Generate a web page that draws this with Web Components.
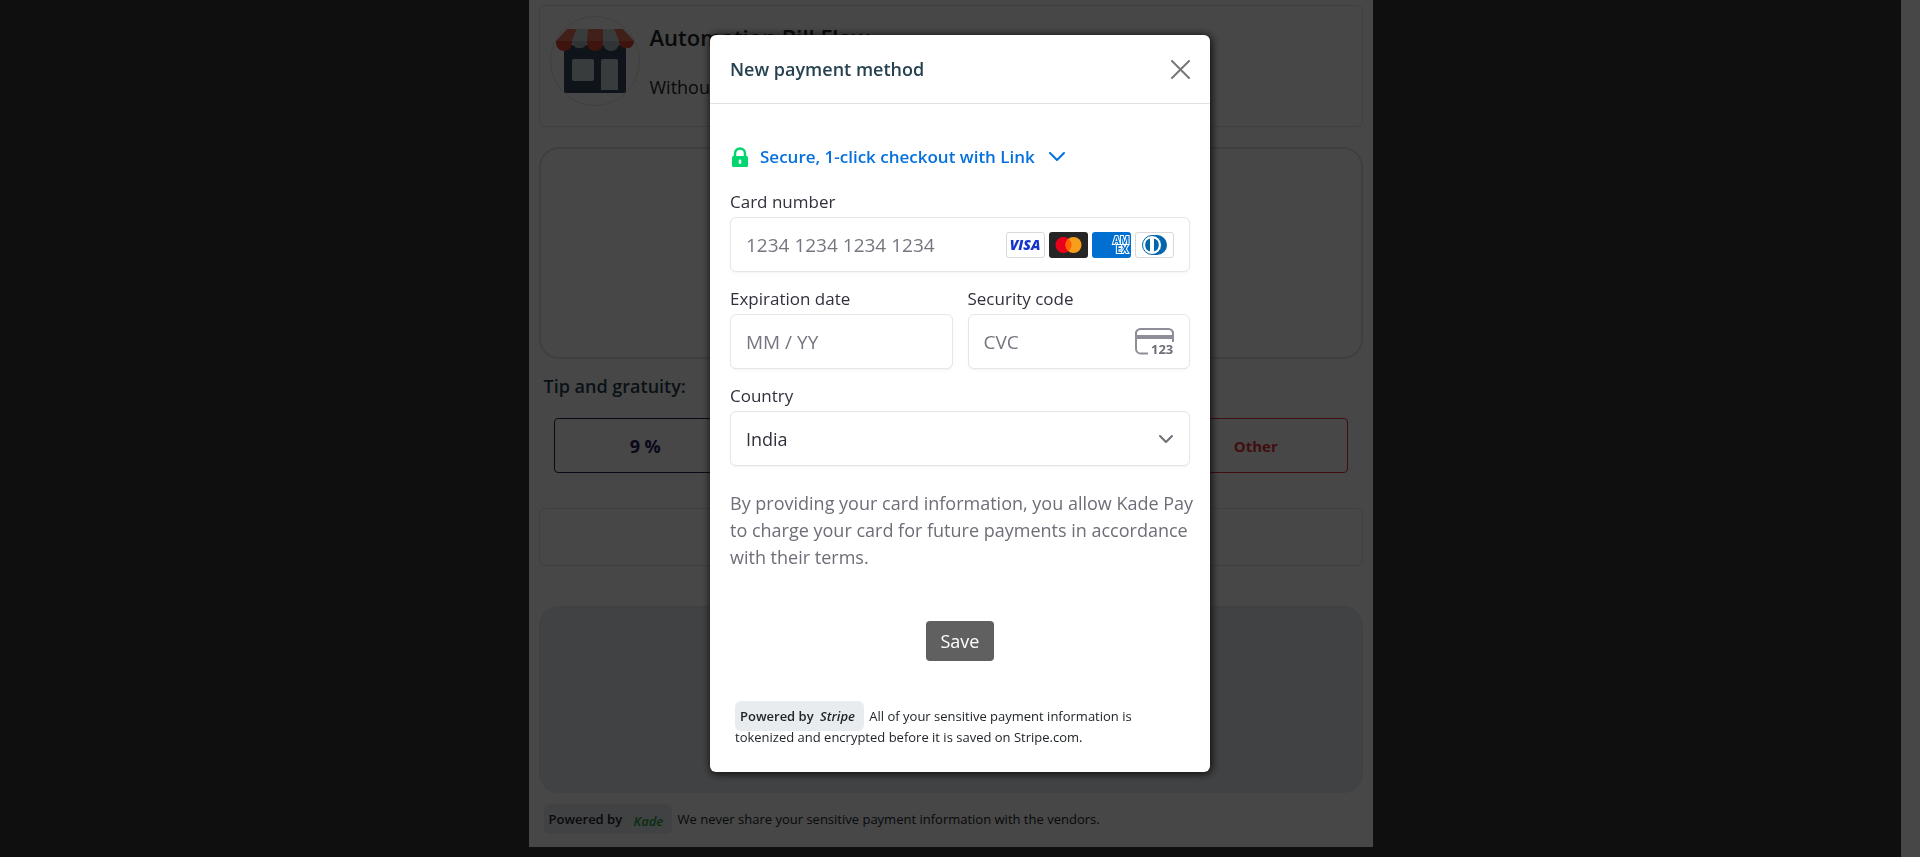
<!DOCTYPE html>
<html lang="en">
<head>
<meta charset="utf-8">
<title>Kade Pay – Automation Bill Flow</title>
<style>
  html, body { margin: 0; min-height: 100%; }
  body { background: #383838; color: #212529; font-family: "Open Sans", "Noto Sans", sans-serif; font-size: 18px; }
</style>
</head>
<body>
<kade-page>
  <store-card heading="Automation Bill Flow" subtitle="Without"></store-card>
  <kade-box kind="large"></kade-box>
  <tip-options></tip-options>
  <kade-box kind="line"></kade-box>
  <kade-box kind="filled"></kade-box>
  <powered-note brand="Kade" tone="green">We never share your sensitive payment information with the vendors.</powered-note>
</kade-page>

<pay-modal heading="New payment method">
  <payment-form></payment-form>
  <powered-note brand="Stripe">All of your sensitive payment information is tokenized and encrypted before it is saved on Stripe.com.</powered-note>
</pay-modal>

<script>
class Base extends HTMLElement {
  constructor() {
    super();
    this.attachShadow({ mode: "open" });
  }
  connectedCallback() {
    this.shadowRoot.innerHTML = "<style>*{box-sizing:border-box}:host{display:block}</style>" + this.render();
  }
  attr(name) { return this.getAttribute(name) || ""; }
}

/* Centred page column with a light gutter on the right of the window */
customElements.define("kade-page", class extends Base {
  render() {
    return `<style>
      :host { display: grid; grid-template-columns: minmax(0, 1fr) 19px; min-height: 100vh; }
      main { width: 100%; max-width: 844px; justify-self: center; align-self: start; background: #fff; padding: 5px 10px 10px; }
      .gutter { background: #fff; }
    </style>
    <main><slot></slot></main><div class="gutter"></div>`;
  }
});

customElements.define("store-card", class extends Base {
  render() {
    return `<style>
      section { display: flex; gap: 10px; padding: 10px; border: 1px solid #dee2e6; border-radius: 6px; min-height: 122px; }
      .logo { width: 90px; height: 90px; flex: none; border: 1px solid #dee2e6; border-radius: 50%; }
      svg { display: block; width: 88px; height: 88px; }
      h1 { margin: 6px 0 0; font-size: 22px; line-height: 30px; font-weight: 600; }
      p { margin: 22px 0 0; font-size: 18px; line-height: 26px; font-weight: 500; }
    </style>
    <section>
      <div class="logo"><svg viewBox="0 0 88 88" aria-hidden="true">
        <path d="M13 28h62v46a2 2 0 0 1-2 2H15a2 2 0 0 1-2-2z" fill="#34495e"/>
        <rect x="21" y="42" width="22" height="22" rx="2" fill="#ccd6dc"/>
        <path d="M52 42h13a2 2 0 0 1 2 2v29H50V44a2 2 0 0 1 2-2z" fill="#ccd6dc"/>
        <path d="M16 12h10l-5 12H5z" fill="#e8735f"/>
        <path d="M26 12h11v12H21z" fill="#ccd6dc"/>
        <path d="M37 12h15v12H36z" fill="#e8735f"/>
        <path d="M52 12h11l5 12H52z" fill="#ccd6dc"/>
        <path d="M63 12h9l11 12H68z" fill="#e8735f"/>
        <path d="M5 24h16v2a8 8 0 0 1-16 0z" fill="#e04434"/>
        <path d="M21 24h15v2a8 8 0 0 1-15 0z" fill="#b0babf"/>
        <path d="M36 24h16v2a8 8 0 0 1-16 0z" fill="#e04434"/>
        <path d="M52 24h16v2a8 8 0 0 1-16 0z" fill="#b0babf"/>
        <path d="M68 24h15v2a8 8 0 0 1-15 0z" fill="#e04434"/>
      </svg></div>
      <div><h1>${this.attr("heading")}</h1><p>${this.attr("subtitle")}</p></div>
    </section>`;
  }
});

customElements.define("kade-box", class extends Base {
  render() {
    return `<style>
      :host { border: 1px solid #dee2e6; border-radius: 6px; box-sizing: border-box; }
      :host([kind="large"]) { min-height: 212px; margin-top: 20px; border-width: 2px; border-radius: 20px; }
      :host([kind="line"]) { min-height: 58px; margin-top: 35px; }
      :host([kind="filled"]) { min-height: 187px; margin-top: 40px; border-width: 2px; border-color: #e6e9ed; border-radius: 20px; background: #e9ecef; }
    </style><slot></slot>`;
  }
});

customElements.define("tip-options", class extends Base {
  render() {
    return `<style>
      h2 { margin: 13px 5px 18px; font-size: 18px; line-height: 28px; font-weight: 600; color: #264150; }
      .row { display: grid; grid-template-columns: repeat(4, 1fr); gap: 20px; padding: 0 15px; }
      button { height: 55px; padding: 0; border: 1px solid #23235b; border-radius: 4px; background: #fff; color: #23235b; font: 700 18px "Open Sans", sans-serif; }
      .other { grid-column: 4; border-color: #e8323c; color: #e8323c; font-size: 15px; }
    </style>
    <h2>Tip and gratuity:</h2>
    <div class="row"><button type="button">9 %</button><button type="button" class="other">Other</button></div>`;
  }
});

customElements.define("powered-note", class extends Base {
  render() {
    return `<style>
      :host { font-size: 13px; line-height: 21px; padding: 16px 5px 7px; }
      p { margin: 0; }
      .badge { background: #e9ecef; border-radius: 6px; padding: 6px 9px 6px 5px; margin-right: 2px; font-weight: 600; }
      i { margin-left: 3px; }
      :host([tone]) i { color: #28a745; margin-left: 8px; position: relative; top: 2px; }
    </style>
    <p><span class="badge">Powered by <i>${this.attr("brand")}</i></span> <slot></slot></p>`;
  }
});

/* Dimmed backdrop with the dialog on top */
customElements.define("pay-modal", class extends Base {
  render() {
    return `<style>
      :host { position: fixed; inset: 0; overflow: auto; padding: 35px 16px; background: rgba(0, 0, 0, .72); }
      .dialog { max-width: 500px; margin: 0 auto; background: #fff; border-radius: 6px; box-shadow: 1px 1px 8px 1px rgba(0, 0, 0, .8); }
      header { display: flex; align-items: center; justify-content: space-between; padding: 20px; border-bottom: 1px solid #dee2e6; }
      h2 { margin: 0; font-size: 18px; line-height: 28px; font-weight: 600; color: #264150; }
      button { display: flex; padding: 0; border: 0; background: none; color: #777; }
      svg { width: 19px; height: 19px; }
      .body { padding: 41px 20px 17px; }
    </style>
    <div class="dialog" role="dialog" aria-modal="true" aria-labelledby="title">
      <header><h2 id="title">${this.attr("heading")}</h2>
        <button type="button" aria-label="Close"><svg viewBox="0 0 19 19" aria-hidden="true"><path d="M1 1l17 17M18 1L1 18" stroke="currentColor" stroke-width="2" stroke-linecap="round"/></svg></button>
      </header>
      <div class="body"><slot></slot></div>
    </div>`;
  }
});

/* Labelled text box, with a slot for icons at its right end */
customElements.define("pay-field", class extends Base {
  render() {
    return `<style>
      label { display: block; margin-bottom: 3px; font-size: 17px; line-height: 24px; color: #30313d; }
      .box { display: flex; align-items: center; height: 55px; padding: 0 15px; border: 1px solid #e6e6e6; border-radius: 6px; background: #fff; box-shadow: 0 1px 1px rgba(0, 0, 0, .03), 0 3px 6px rgba(0, 0, 0, .02); }
      input { flex: 1; min-width: 0; width: 100%; padding: 0; border: 0; outline: 0; background: none; color: #30313d; font: 19px "Open Sans", sans-serif; }
      input::placeholder { color: #757680; opacity: 1; }
    </style>
    <label for="field">${this.attr("label")}</label>
    <div class="box"><input id="field" type="text" inputmode="numeric" placeholder="${this.attr("placeholder")}"><slot></slot></div>`;
  }
});

customElements.define("country-field", class extends Base {
  render() {
    return `<style>
      label { display: block; margin-bottom: 3px; font-size: 17px; line-height: 24px; color: #30313d; }
      .box { display: grid; align-items: center; }
      select, svg { grid-area: 1 / 1; }
      select { appearance: none; width: 100%; height: 55px; padding: 0 15px; border: 1px solid #e6e6e6; border-radius: 6px; background: #fff; color: #30313d; font: 18px "Open Sans", sans-serif; box-shadow: 0 1px 1px rgba(0, 0, 0, .03), 0 3px 6px rgba(0, 0, 0, .02); }
      svg { justify-self: end; width: 16px; height: 10px; margin-right: 16px; pointer-events: none; }
    </style>
    <label for="country">Country</label>
    <div class="box"><select id="country"><option>India</option></select>
      <svg viewBox="0 0 16 10" aria-hidden="true"><path d="M2 2l6 6 6-6" fill="none" stroke="#6d6e78" stroke-width="2" stroke-linecap="round" stroke-linejoin="round"/></svg>
    </div>`;
  }
});

customElements.define("card-brands", class extends Base {
  render() {
    return `<style>
      :host { display: flex; gap: 4px; }
      svg { display: block; width: 39px; height: 26px; }
      text { font-family: "Open Sans", sans-serif; }
    </style>
    <svg viewBox="0 0 39 26" role="img" aria-label="Visa">
      <rect x=".5" y=".5" width="38" height="25" rx="2.5" fill="#fff" stroke="#d9d9d9"/>
      <text x="19" y="18" text-anchor="middle" font-size="14" font-weight="800" font-style="italic" fill="#1434cb">VISA</text>
    </svg>
    <svg viewBox="0 0 39 26" role="img" aria-label="Mastercard">
      <rect width="39" height="26" rx="3" fill="#252525"/>
      <circle cx="14.5" cy="13" r="8" fill="#eb001b"/><circle cx="24.5" cy="13" r="8" fill="#f79e1b"/>
      <path d="M19.5 6.75a8 8 0 0 1 0 12.5a8 8 0 0 1 0-12.5z" fill="#ff5f00"/>
    </svg>
    <svg viewBox="0 0 39 26" role="img" aria-label="American Express">
      <defs><clipPath id="c"><rect width="39" height="26" rx="3"/></clipPath></defs>
      <rect width="39" height="26" rx="3" fill="#016fd0"/>
      <g clip-path="url(#c)" fill="#016fd0" stroke="#fff" stroke-width="2" paint-order="stroke" font-size="10" font-weight="700">
        <text x="21" y="12">AM</text><text x="24" y="21">EX</text>
      </g>
    </svg>
    <svg viewBox="0 0 39 26" role="img" aria-label="Diners Club">
      <rect x=".5" y=".5" width="38" height="25" rx="2.5" fill="#fff" stroke="#d9d9d9"/>
      <path d="M17 3h5a10 10 0 0 1 0 20h-5z" fill="#0165ac"/>
      <circle cx="17" cy="13" r="9.5" fill="#fff" stroke="#0165ac"/>
      <path d="M15 6.5a6.8 6.8 0 0 0 0 13zM19 6.5a6.8 6.8 0 0 1 0 13z" fill="#0165ac"/>
    </svg>`;
  }
});

customElements.define("cvc-icon", class extends Base {
  render() {
    return `<style>svg { display: block; width: 39px; height: 27px; overflow: visible; }</style>
    <svg viewBox="0 0 39 27" aria-hidden="true">
      <path d="M13 25.5H6A4.5 4.5 0 0 1 1 21V6a4.5 4.5 0 0 1 5-5h27a4.5 4.500 0 0 1 5 5v8" fill="none" stroke="#8d8e98" stroke-width="2"/>
      <rect x="1" y="7" width="37" height="4" fill="#8d8e98"/>
      <text x="16" y="26" font-family="Open Sans, sans-serif" font-size="13" font-weight="700" fill="#6d6e78">123</text>
    </svg>`;
  }
});

customElements.define("payment-form", class extends Base {
  render() {
    return `<style>
      form { display: grid; grid-template-columns: minmax(0, 1fr); gap: 15px; margin-bottom: 29px; }
      .link { display: flex; align-items: center; justify-self: start; height: 24px; margin-bottom: 6px; padding: 0; border: 0; background: none; color: #0570de; font: 600 17px/24px "Open Sans", sans-serif; }
      .lock { width: 20px; height: 20px; margin-right: 10px; }
      .chev { width: 16px; height: 10px; margin-left: 14px; }
      .pair { display: grid; grid-template-columns: 1fr 1fr; gap: 15px; }
      .terms { margin: 9px 0 0; font-size: 18px; line-height: 27px; color: #6d6e78; white-space: nowrap; }
      .save { justify-self: center; height: 40px; margin-top: 35px; padding: 0 15px; border: 0; border-radius: 4px; background: #606060; color: #fff; font: 18px "Open Sans", sans-serif; }
    </style>
    <form>
      <button type="button" class="link">
        <svg class="lock" viewBox="0 0 20 20" aria-hidden="true"><path d="M5 10V6.500a5 5 0 0 1 10 0V10" fill="none" stroke="#00d66f" stroke-width="2.500"/><path fill-rule="evenodd" d="M3.500 9h13A1.500 1.500 0 0 1 18 10.500v8a1.500 1.500 0 0 1-1.500 1.500h-13A1.500 1.500 0 0 1 2 18.500v-8A1.500 1.500 0 0 1 3.500 9zM10 12.500a1.300 1.300 0 0 0-1.300 1.300v2a1.300 1.300 0 0 0 2.600 0v-2A1.300 1.300 0 0 0 10 12.500z" fill="#00d66f"/></svg>
        Secure, 1-click checkout with Link
        <svg class="chev" viewBox="0 0 16 10" aria-hidden="true"><path d="M1 1l7 7 7-7" fill="none" stroke="#0570de" stroke-width="2" stroke-linecap="round" stroke-linejoin="round"/></svg>
      </button>
      <pay-field label="Card number" placeholder="1234 1234 1234 1234"><card-brands></card-brands></pay-field>
      <div class="pair">
        <pay-field label="Expiration date" placeholder="MM / YY"></pay-field>
        <pay-field label="Security code" placeholder="CVC"><cvc-icon></cvc-icon></pay-field>
      </div>
      <country-field></country-field>
      <p class="terms">By providing your card information, you allow Kade Pay<br>to charge your card for future payments in accordance<br>with their terms.</p>
      <button type="button" class="save">Save</button>
    </form>`;
  }
});
</script>
</body>
</html>
